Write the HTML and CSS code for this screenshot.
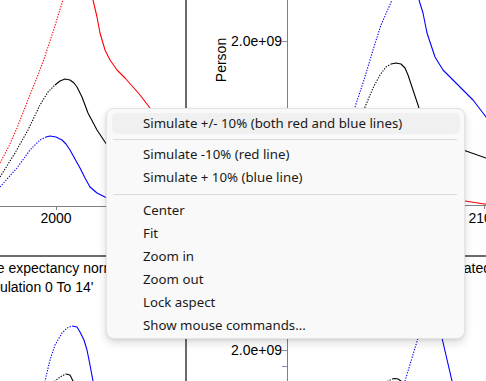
FILE: index.html
```html
<!DOCTYPE html>
<html>
<head>
<meta charset="utf-8">
<link rel="stylesheet" href="styles.css">
</head>
<body>
<div class="dash">
  <section class="panel">
    <svg class="plot plot-top" width="185" height="255" viewBox="0 0 185 255">
      <polyline class="ln red dot" points="0,163 9,146 17,128 28,100 36,80 43,62 53,32 63,0"/>
      <polyline class="ln red" points="93,0 97,17 100,33 105,50 110,60 117,70 125,78 133,87 140,95 150,108 160,120"/>
      <polyline class="ln blk dot" points="0,177 15,153 28,130 40,105 48,92 55,85"/>
      <polyline class="ln blk" points="55,85 60,81 65,79 70,80 74,83 77,87 82,97 88,113 97,130 105,142 112,152"/>
      <polyline class="ln blu dot" points="0,187 17,168 30,150 40,140 46,137"/>
      <polyline class="ln blu" points="46,137 50,136 56,137 62,140 66,144 70,150 75,159 80,168 85,178 90,187 97,193 105,197 115,200"/>
      <line class="axis" x1="0" y1="206.5" x2="185" y2="206.5"/>
      <line class="axis" x1="56.5" y1="206" x2="56.5" y2="210"/>
      <text class="tick" x="56" y="223" text-anchor="middle">2000</text>
    </svg>
  </section>
  <section class="panel">
    <svg class="plot plot-top" width="320" height="255" viewBox="0 0 320 255">
      <text class="tick" transform="translate(39 60) rotate(-90)" text-anchor="middle">Person</text>
      <polyline class="ln blu dot" points="160,130 168,107 177,80 186,50 194,25 205,0"/>
      <polyline class="ln blu" points="232,0 236,13 240,33 248,57 256,70 266,80 276,90 286,100 296,113 299,117 310,130"/>
      <polyline class="ln blk dot" points="170,125 178,107 186,88 193,75 199,67 204,64"/>
      <polyline class="ln blk" points="204,64 209,63 214,64 218,68 221,75 226,90 232,108 240,124 252,138 265,146 279,151 299,158 320,164"/>
      <polyline class="ln red" points="260,198 278,201 297,204 320,205"/>
      <line class="axis" x1="100.5" y1="0" x2="100.5" y2="206"/>
      <line class="axis" x1="100" y1="205.5" x2="320" y2="205.5"/>
      <line class="ytick" x1="95" y1="41.5" x2="100" y2="41.5"/>
      <text class="tick" x="95" y="46" text-anchor="end">2.0e+09</text>
      <line class="axis" x1="297.5" y1="205" x2="297.5" y2="209"/>
      <text class="tick" x="297" y="223" text-anchor="middle">2100</text>
    </svg>
  </section>
  <section class="panel">
    <div class="title title-left">
      <div class="tl tl-1">Life expectancy normalized</div>
      <div class="tl tl-2">Population 0 To 14'</div>
    </div>
    <svg class="plot" width="185" height="100" viewBox="0 0 185 100">
      <polyline class="ln blu dot" points="43,90 45,84 50,63 55,48 62,36 67,31 72,29"/>
      <polyline class="ln blu" points="72,29 77,30 80,35 84,43 87,53 90,68 93,84 95,95"/>
      <polyline class="ln blk dot" points="53,90 55,84 60,80 66,77"/>
      <polyline class="ln blk" points="66,77 70,78 73,84 75,90"/>
    </svg>
  </section>
  <section class="panel">
    <div class="title title-right">
      <div class="tl">Population 0 To 14 normalized to simulated</div>
      <div class="tl tl-center">Population 0 To 14'</div>
    </div>
    <svg class="plot" width="320" height="100" viewBox="0 0 320 100">
      <line class="axis" x1="100.5" y1="0" x2="100.5" y2="100"/>
      <line class="ytick" x1="95" y1="53.5" x2="100" y2="53.5"/>
      <line class="ytick" x1="95" y1="69.5" x2="100" y2="69.5"/>
      <text class="tick" x="95" y="58" text-anchor="end">2.0e+09</text>
      <polyline class="ln blu dot" points="243,3 238,18 231,41 218,84 215,95"/>
      <polyline class="ln blu" points="243,3 250,18 255,41 265,84 268,95"/>
      <polyline class="ln blk dot" points="199,90 201,84 205,82"/>
      <polyline class="ln blk" points="205,82 208,81.5 211,82 214,84 216,90"/>
    </svg>
  </section>
</div>

<div class="menu" role="menu">
  <div class="item active">Simulate +/- 10% (both red and blue lines)</div>
  <div class="sep sep-a"></div>
  <div class="item">Simulate -10% (red line)</div>
  <div class="item">Simulate + 10% (blue line)</div>
  <div class="sep sep-b"></div>
  <div class="item">Center</div>
  <div class="item">Fit</div>
  <div class="item">Zoom in</div>
  <div class="item">Zoom out</div>
  <div class="item">Lock aspect</div>
  <div class="item">Show mouse commands...</div>
</div>
</body>
</html>
```

FILE: styles.css
```css
html, body {
  margin: 0;
  padding: 0;
  background: #ffffff;
}

body {
  width: 486px;
  height: 381px;
  overflow: hidden;
  position: relative;
  font-family: "Liberation Sans", Arial, sans-serif;
}

.dash {
  display: grid;
  grid-template-columns: 185px 320px;
  grid-template-rows: 255px 200px;
  gap: 2px;
  background: #6b6b6b;
  width: 507px;
}

.panel {
  background: #ffffff;
  overflow: hidden;
  display: flex;
  flex-direction: column;
}

.plot {
  display: block;
  flex: none;
}

.ln {
  fill: none;
  stroke-width: 1.1;
  stroke-linejoin: round;
}

.red { stroke: #ff0000; }
.blk { stroke: #000000; }
.blu { stroke: #0000ff; }

.dot {
  stroke-dasharray: 1.3 1.4;
}

.axis {
  stroke: #808080;
  stroke-width: 1;
}

.ytick {
  stroke: #7f93b0;
  stroke-width: 1;
}

.tick {
  font-family: "Liberation Sans", Arial, sans-serif;
  font-size: 14px;
  fill: #000000;
}

.title {
  padding-top: 2px;
  height: 38px;
  font-size: 14px;
  line-height: 19px;
  color: #000000;
  white-space: nowrap;
}

.title-left .tl-1 {
  margin-left: -18px;
}

.title-left .tl-2 {
  margin-left: -25px;
}

.title-right {
  text-align: right;
  padding-right: 16px;
}

.title-right .tl-center {
  text-align: center;
}

.menu {
  position: absolute;
  left: 106px;
  top: 108px;
  width: 359px;
  box-sizing: border-box;
  padding: 3px 4px 1px 5px;
  background: #f9f9f9;
  border: 1px solid #e3e3e3;
  border-radius: 8px;
  box-shadow: 0 4px 10px rgba(0, 0, 0, 0.14), 0 1px 3px rgba(0, 0, 0, 0.08);
  font-family: "Noto Sans", "Open Sans", sans-serif;
  font-size: 13.25px;
  color: #1a1a1a;
}

.item {
  height: 21px;
  line-height: 21px;
  border-top: 1px solid transparent;
  border-bottom: 1px solid transparent;
  background-clip: padding-box;
  padding-left: 31px;
  border-radius: 5px;
  white-space: nowrap;
}

.item.active {
  background-color: #f0f0f0;
}

.sep {
  height: 1px;
  background: #dadada;
  margin-left: 1px;
  margin-right: 3px;
}

.sep-a {
  margin-top: 4px;
  margin-bottom: 3px;
}

.sep-b {
  margin-top: 5px;
  margin-bottom: 4px;
}
```
